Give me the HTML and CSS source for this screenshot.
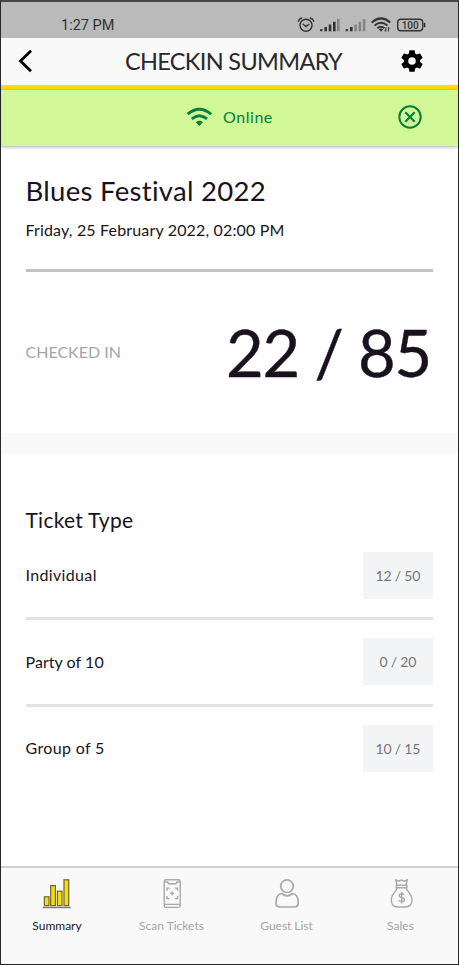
FILE: index.html
```html
<!DOCTYPE html>
<html lang="en">
<head>
<meta charset="utf-8">
<title>Checkin Summary</title>
<link rel="stylesheet" href="styles.css">
</head>
<body>
<div class="phone">
  <div class="status">
    <span class="time">1:27 PM</span>
    <svg class="status-icons" width="132" height="20" viewBox="0 0 132 20" fill="none" stroke="#333" stroke-width="1.4">
      <circle cx="9" cy="10.3" r="6"/><path d="M6.2 9.3l2.8 2.2 2.9-2.2M1.3 6.2Q2.3 3.8 4.7 3M16.8 6.2Q15.8 3.8 13.3 3" stroke-linecap="round"/>
      <g stroke="none" fill="#333"><rect x="23" y="14" width="2.6" height="2.3" rx="1"/><rect x="27.4" y="12" width="2.6" height="4.3"/><rect x="31.7" y="9.5" width="2.6" height="6.8"/><rect x="36" y="6.8" width="2.6" height="9.5"/><rect x="40" y="4" width="2.6" height="12.3" fill="#858585"/>
      <rect x="48.5" y="14" width="2.6" height="2.3" rx="1"/><rect x="53" y="12" width="2.6" height="4.3"/><rect x="57.3" y="9.5" width="2.6" height="6.8" fill="#858585"/><rect x="61.6" y="6.8" width="2.6" height="9.5" fill="#858585"/><rect x="65.8" y="4" width="2.6" height="12.3" fill="#858585"/></g>
      <path d="M74.8 7.4Q84 -.6 93.2 7.4M77.6 10.4Q84 5 90.4 10.4M80.4 13.2Q84 10.4 87.4 13.2" stroke-width="2"/><path d="M81.8 14.2L84 16.8 86.2 14.2Q84 12.9 81.8 14.2Z" fill="#333" stroke="none"/><path d="M88.8 12.2v4.3M88.8 16.5l-1.2-1.3M91.4 16.5v-4.3M91.4 12.2l1.2 1.3" stroke-width="1"/>
      <rect x="100.7" y="4.2" width="25" height="11.6" rx="3.2"/><path d="M127.6 7.8v4.4" stroke-width="1.6"/>
      <text class="battery" x="113.2" y="13.6" text-anchor="middle">100</text>
    </svg>
  </div>
  <header class="topbar">
    <svg class="back" width="16" height="24" viewBox="0 0 16 24" fill="none" stroke="#000" stroke-width="2.8"><path d="M13 1.8L2.5 12 13 22.2"/></svg>
    <h1>CHECKIN SUMMARY</h1>
    <svg class="gear" width="26" height="26" viewBox="0 0 24 24"><path d="M19.43 12.98c.04-.32.07-.64.07-.98s-.03-.66-.07-.98l2.11-1.65c.19-.15.24-.42.12-.64l-2-3.46c-.12-.22-.39-.3-.61-.22l-2.49 1c-.52-.4-1.08-.73-1.69-.98l-.38-2.65A.49.49 0 0 0 14 2h-4c-.25 0-.46.18-.49.42l-.38 2.65c-.61.25-1.17.59-1.69.98l-2.49-1c-.23-.09-.49 0-.61.22l-2 3.46c-.13.22-.07.49.12.64l2.11 1.65c-.04.32-.07.65-.07.98s.03.66.07.98l-2.11 1.65c-.19.15-.24.42-.12.64l2 3.46c.12.22.39.3.61.22l2.49-1c.52.4 1.08.73 1.69.98l.38 2.65c.03.24.24.42.49.42h4c.25 0 .46-.18.49-.42l.38-2.65c.61-.25 1.17-.59 1.69-.98l2.49 1c.23.09.49 0 .61-.22l2-3.46c.12-.22.07-.49-.12-.64zM12 15.5a3.5 3.5 0 1 1 0-7 3.5 3.5 0 0 1 0 7z"/></svg>
  </header>
  <div class="banner">
    <svg class="wifi" width="26" height="20" viewBox="0 0 26 20" fill="none" stroke="#04803f" stroke-width="2.9"><path d="M1.6 7.2Q13.4 -2.8 25.2 7.2M5.8 11.9Q13.4 5.5 21 11.9"/><path d="M9.8 15.2Q13.4 12.3 17 15.2L13.4 19Z" fill="#04803f" stroke="none"/></svg>
    <span>Online</span>
    <svg class="close" width="24" height="24" viewBox="0 0 24 24" fill="none" stroke="#04803f" stroke-width="2"><circle cx="12" cy="12" r="10.7"/><path d="M7.3 7.3l9.4 9.4M16.7 7.3l-9.4 9.4" stroke-width="2.2"/></svg>
  </div>
  <section class="event">
    <h2>Blues Festival 2022</h2>
    <p>Friday, 25 February 2022, 02:00 PM</p>
    <div class="total"><span>CHECKED IN</span><strong>22 / 85</strong></div>
  </section>
  <section class="tickets">
    <h3>Ticket Type</h3>
    <div class="row"><span>Individual</span><b>12 / 50</b></div>
    <div class="row"><span class="tight">Party of 10</span><b>0 / 20</b></div>
    <div class="row"><span>Group of 5</span><b>10 / 15</b></div>
  </section>
  <nav>
    <a class="active"><svg width="30" height="32" viewBox="0 0 30 32" fill="#f9df00" stroke="#69663e" stroke-width="1.2"><path d="M.7 29.5h28" stroke="#777" stroke-width="1.4"/><rect x="2.4" y="18.8" width="4.6" height="8.8"/><rect x="8.7" y="7.6" width="4.7" height="20"/><rect x="15.4" y="13.2" width="4.6" height="14.4"/><rect x="22" y="1.8" width="4.7" height="25.8"/></svg><span>Summary</span></a>
    <a><svg width="30" height="32" viewBox="0 0 30 32" fill="none" stroke="#a9a9a9" stroke-width="1.4"><rect x="7.2" y="1.8" width="16" height="27.6" rx="1.6"/><path d="M7.2 4h3.3l1.2 1.8h7.1L20 4h3.2M7.2 26.4h16M10 12.8v-2.7h2.7M17.8 10.1h2.7v2.7M20.5 17.9v2.7h-2.7M12.7 20.6H10v-2.7M15.2 13.4v4M13.2 15.4h4"/></svg><span>Scan Tickets</span></a>
    <a class="guest"><svg width="30" height="32" viewBox="0 0 30 32" fill="none" stroke="#a9a9a9" stroke-width="1.7"><circle cx="15" cy="8.2" r="6.3"/><path d="M9.7 15.5Q4 16.5 4 25Q4 29 8 29h14.3Q26.3 29 26.3 25Q26.3 16.5 20.6 15.5Q15 20.2 9.7 15.5Z"/></svg><span>Guest List</span></a>
    <a><svg width="30" height="32" viewBox="0 0 30 32" fill="none" stroke="#a9a9a9" stroke-width="1.4"><path d="M11 7.2L9.8 2l2.8 1.2L15.5 2l2.8 1.2L21.2 2 20 7.2M10.3 7.3h10.6v2.4H10.3zM11.2 9.8C10.5 13 5.3 16 5.3 21.8Q5.3 29 12 29h7.2Q26 29 26 21.8C26 16 20.7 13 20 9.8"/><path d="M18.2 17Q17.5 15.8 15.7 15.8Q13.2 15.8 13.2 17.6Q13.2 19.1 15.7 19.6Q18.4 20.1 18.4 21.8Q18.4 23.7 15.7 23.7Q13.7 23.7 13 22.4M15.7 14v11.6"/></svg><span>Sales</span></a>
  </nav>
</div>
</body>
</html>
```
FILE: styles.css
```css
* { box-sizing: border-box; }
body { margin: 0; font-family: Lato, "Open Sans", sans-serif; font-variant-ligatures: none; color: #19121e; }
h1, h2, h3, p { margin: 0; font-weight: 400; white-space: nowrap; }
svg { display: block; flex: none; }
span, strong, b { white-space: nowrap; }
.phone { width: 459px; height: 965px; display: flex; flex-direction: column; background: #fff; border: 1px solid #272727; border-top: 2px solid #444; }
.status { height: 36px; flex: none; background: #bababa; display: flex; align-items: flex-start; justify-content: space-between; padding: 13px 29px 0 60px; }
.time { font: 400 14.5px/22px Roboto, sans-serif; color: #333; }
.battery { font: 500 10px Roboto, sans-serif; fill: #333; stroke: none; }
.topbar { height: 51.5px; flex: none; background: #f9f9f9; border-bottom: 5px solid #fbdf00; display: grid; grid-template-columns: 60px 1fr 60px; align-items: center; }
.back { margin-left: 17px; }
.topbar h1 { text-align: center; font-size: 23.5px; letter-spacing: -.65px; line-height: 46px; margin-left: 8px; color: #2a272d; }
.gear { margin-left: 1px; }
.banner { height: 56px; flex: none; background: #d1f797; color: #04803f; display: grid; grid-template-columns: 26px 1fr 24px; align-items: center; column-gap: 11px; padding: 0 36px 2px 185px; font-size: 16px; letter-spacing: .55px; box-shadow: 0 1px 4px #0005; z-index: 1; }
.event { height: 308.5px; flex: none; padding: 25.5px 25px 0 24.5px; border-bottom: 21px solid #f9f9f9; }
.event h2 { font-size: 27.5px; line-height: 40px; letter-spacing: .3px; }
.event p { font-size: 16px; line-height: 24px; letter-spacing: .16px; margin-top: 7px; padding-bottom: 27px; border-bottom: 3px solid #c2c2c2; box-sizing: content-box; }
.total { display: flex; justify-content: space-between; align-items: center; height: 159px; font-size: 16px; color: #a5a5a5; }
.total strong { font-size: 65px; font-weight: 400; letter-spacing: -1.2px; margin-right: 2px; -webkit-text-stroke: .4px #19121e; color: #19121e; }
.tickets { flex: 1; padding: 51.5px 25px 0 24.5px; }
.tickets h3 { font-size: 21px; line-height: 28px; letter-spacing: .25px; margin-bottom: 18px; }
.row { height: 68.5px; margin-bottom: 18px; padding-bottom: 18.5px; border-bottom: 3px solid #e3e3e3; display: flex; align-items: center; justify-content: space-between; font-size: 16px; letter-spacing: .35px; }
.row span { padding-bottom: 1px; }
.row .tight { letter-spacing: .05px; }
.row:last-child { border-bottom-color: transparent; }
.row b { width: 70px; height: 47px; line-height: 47px; text-align: center; background: #f3f4f6; color: #777; font-size: 14px; font-weight: 400; letter-spacing: 0; word-spacing: -.5px; }
nav { height: 98px; flex: none; background: #f9f9f9; border-top: 2px solid #cfcfcf; display: grid; grid-template-columns: 112px 117px 113px 115px; padding-top: 10px; }
nav a { display: flex; flex-direction: column; align-items: center; gap: 6px; font-size: 12px; line-height: 20px; color: #a5a5a5; }
nav .guest { letter-spacing: -.05px; }
nav .active { color: #222; }
```
